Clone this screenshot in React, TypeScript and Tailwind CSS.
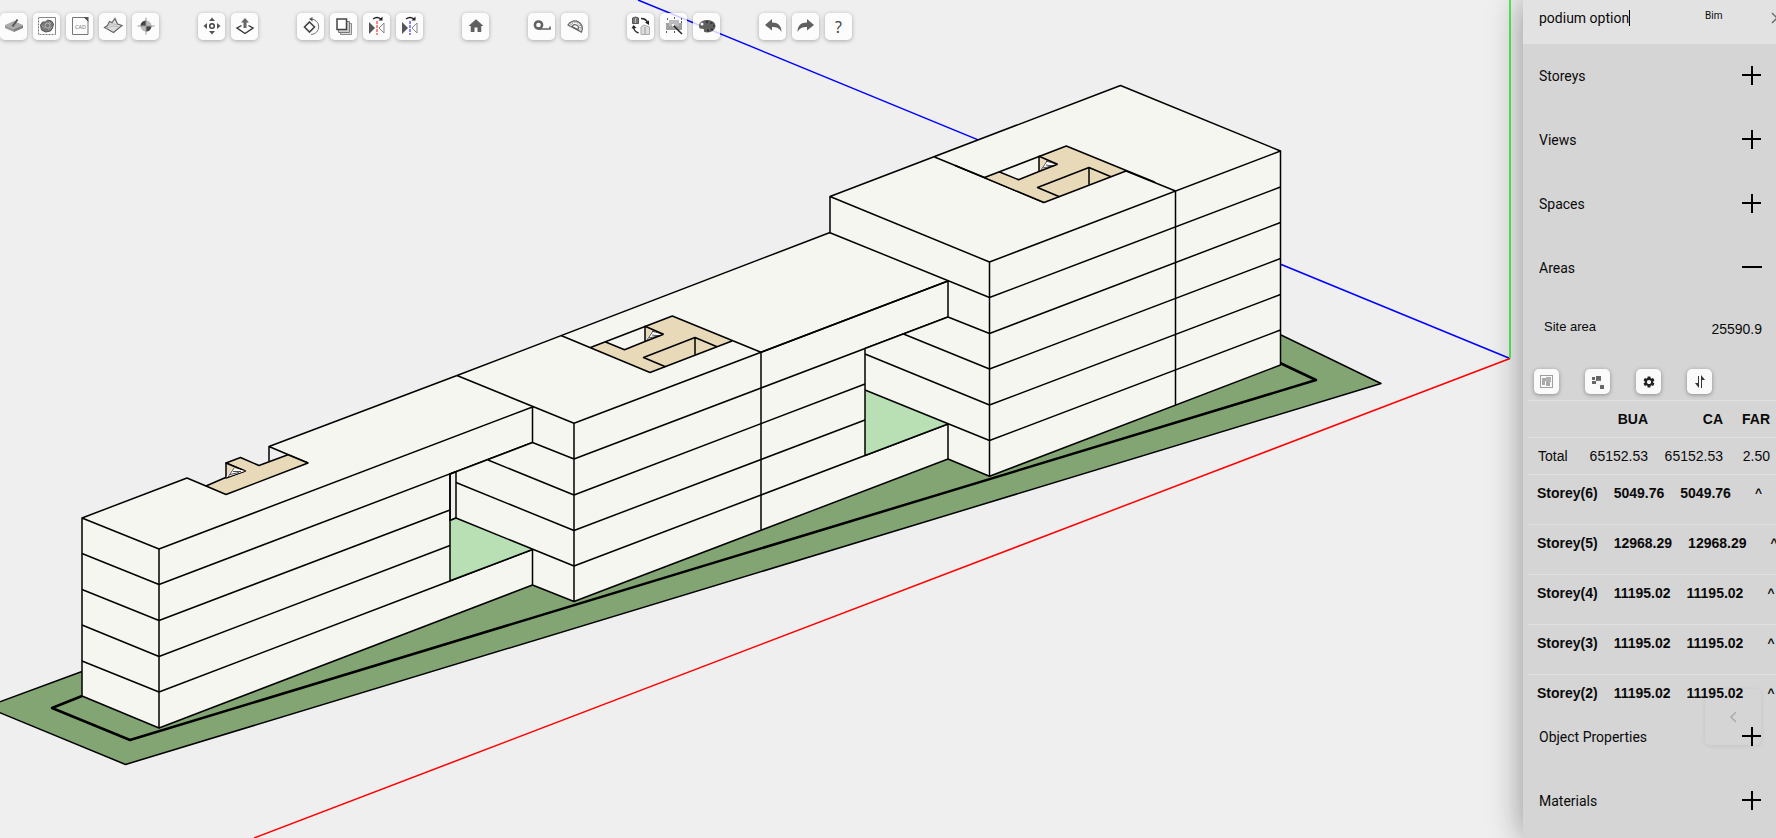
import React from 'react';
import { MdHome, MdSettings } from 'react-icons/md';

interface Tool {
  label: string;
  icon: React.ReactNode;
}

const Glyph: React.FC<{ children: React.ReactNode }> = ({ children }) => (
  <svg viewBox="0 0 27 27" className="h-full w-full" fill="none" aria-hidden="true">
    {children}
  </svg>
);

const MirrorGlyph: React.FC<{ axis: string }> = ({ axis }) => (
  <Glyph>
    <path d="M6 9v12l6-6z" fill="#555" />
    <path d="M21 10v10l-5-5z" stroke="#888" />
    <path d="M14 8v14" stroke={axis} strokeWidth="2" strokeDasharray="3 1" />
    <path d="M10 6q4-3 8 0" stroke="#222" strokeWidth="1.3" />
    <path d="M19.5 3.5v4h-4z" fill="#222" />
  </Glyph>
);

const toolGroups: Tool[][] = [
  [
    {
      label: 'Slab',
      icon: (
        <Glyph>
          <path d="M5 12l9-4 9 4-9 4z" fill="#aaa" />
          <path d="M5 12l9 4v3l-9-4z" fill="#999" />
          <path d="M23 12l-9 4v3l9-4z" fill="#808080" />
          <path d="M12.5 13.5l5-7" stroke="#555" strokeWidth="2" />
        </Glyph>
      ),
    },
    {
      label: 'Image map',
      icon: (
        <Glyph>
          <path d="M6 4.5h16.5v17" stroke="#888" />
          <path d="M5.5 4.5v17h17" stroke="#777" strokeDasharray="2 1" />
          <path d="M7.5 12l2-3h3l2-2 4 1 2 3-1 4-2 3-5 1-4-2z" fill="#777" stroke="#555" />
          <circle cx="14.5" cy="12.5" r="2.5" stroke="#bbb" />
          <path d="M9 12.5l3 3M16 9l2 2M15 17l4-3" stroke="#aaa" />
        </Glyph>
      ),
    },
    {
      label: 'CAD file',
      icon: (
        <Glyph>
          <path d="M6.5 4.5h12l3.5 3.5v13.5h-15.5z" stroke="#777" />
          <path d="M17.5 4h5v5z" fill="#555" />
          <text x="14.5" y="15.8" textAnchor="middle" fontSize="5.5" fill="#777" fontFamily="Noto Sans, sans-serif">
            CAD
          </text>
        </Glyph>
      ),
    },
    {
      label: 'Terrain',
      icon: (
        <Glyph>
          <path d="M5.5 14.5l3-2 2-4 2.5 1 3-4 2.5 5.5 4.5 1.5-8.5 7z" fill="#ddd" stroke="#666" strokeWidth="1.2" />
          <path d="M9 12.5l4-2 5 1.5M7 15l7-2 6 1" stroke="#bbb" />
        </Glyph>
      ),
    },
    {
      label: 'Origin',
      icon: (
        <Glyph>
          <circle cx="14" cy="13" r="5.5" fill="#bbb" />
          <path d="M14 13V7.5a5.5 5.5 0 0 0-5.500 5.500zM14 13v5.500a5.500 5.500 0 0 0 5.500-5.500z" fill="#444" />
          <path d="M14 4.5v17M5.5 13h17" stroke="#999" />
        </Glyph>
      ),
    },
  ],
  [
    {
      label: 'Move',
      icon: (
        <Glyph>
          <circle cx="14" cy="13" r="2.3" stroke="#444" strokeWidth="1.5" />
          <path d="M14 4.5l3 3.5h-6zM14 21.5l3-3.5h-6zM5.5 13l3.5-3v6zM22.5 13l-3.5-3v6z" fill="#555" />
        </Glyph>
      ),
    },
    {
      label: 'Extrude',
      icon: (
        <Glyph>
          <path d="M10.5 12.5l-4.5 2.500 8 5.500 8-5.500-4.500-2.500" stroke="#333" strokeWidth="1.4" />
          <path d="M14 5l4 4.500h-2.500v5.500h-3v-5.500h-2.500z" fill="#666" />
        </Glyph>
      ),
    },
  ],
  [
    {
      label: 'Rotate',
      icon: (
        <Glyph>
          <path d="M12.5 9l5 5-5 5-5-5z" stroke="#444" strokeWidth="1.6" />
          <path d="M14 6a7.5 7.5 0 1 1 0 15.500" stroke="#777" />
          <path d="M15.5 4v4.500l-3.500-2.500z" fill="#555" />
        </Glyph>
      ),
    },
    {
      label: 'Copy',
      icon: (
        <Glyph>
          <path d="M10.5 10.5h11v11h-11z" fill="#ddd" stroke="#888" />
          <path d="M8.5 8.5h11v11h-11z" fill="#ccc" stroke="#777" />
          <path d="M7 6h9.500v10.500h-9.500z" fill="#fff" stroke="#444" strokeWidth="1.5" />
        </Glyph>
      ),
    },
    { label: 'Mirror on red axis', icon: <MirrorGlyph axis="#ff8585" /> },
    { label: 'Mirror on blue axis', icon: <MirrorGlyph axis="#8585ff" /> },
  ],
  [{ label: 'Home', icon: <MdHome className="mb-0.5 h-[18px] w-[18px] text-[#606060]" /> }],
  [
    {
      label: 'Tape measure',
      icon: (
        <Glyph>
          <circle cx="10.5" cy="12" r="3.6" stroke="#606060" strokeWidth="2.5" />
          <path d="M10 16h12v-2.500" stroke="#606060" strokeWidth="1.6" />
        </Glyph>
      ),
    },
    {
      label: 'Protractor',
      icon: (
        <Glyph>
          <path d="M7 12A7.600 7.600 0 0 1 20.500 19Z" stroke="#666" strokeWidth="1.3" />
          <path d="M9.500 11.500A5 5 0 0 1 19 16.500" stroke="#888" strokeWidth="2.5" strokeDasharray="1 1" />
          <path d="M11 13.500A3 3 0 0 1 17 16.600Z" stroke="#666" strokeWidth="1.2" fill="#fff" />
        </Glyph>
      ),
    },
  ],
  [
    {
      label: 'Swap component',
      icon: (
        <Glyph>
          <path d="M5.5 5l3-1 3 1v5.500h-6z" fill="#777" stroke="#555" />
          <path d="M8.5 5v5" stroke="#bbb" />
          <path d="M14 14l3-2 5.500 2v7.500h-8.500z" fill="#ddd" stroke="#aaa" />
          <path d="M18 14v7" stroke="#999" />
          <path d="M14 5.500q5 0 6.500 4M6.500 14q.5 4.500 5 6" stroke="#222" strokeWidth="1.4" />
          <path d="M22 7.500v4.500l-4-2.500zM4.500 15.500l2-3.500 3 3z" fill="#222" />
        </Glyph>
      ),
    },
    {
      label: 'Auto layout',
      icon: (
        <Glyph>
          <path d="M9 7h10v6h-10z" fill="#bbb" />
          <path d="M6 10h3v3h10v-3h3v7h-16z" fill="#a0a0a0" />
          <path d="M7 6h1M14 5h1M21 6h1M6 19h1M14 19h1M21 9h1" stroke="#222" strokeWidth="1.5" />
          <path d="M13.5 12.5l8.500 8.500" stroke="#222" strokeWidth="1.5" />
          <path d="M12 11l2 2M14 11l-1.500 2.500" stroke="#fff" />
        </Glyph>
      ),
    },
    {
      label: 'Palette',
      icon: (
        <Glyph>
          <path
            d="M14 7c5 0 8.500 2.500 8.500 6s-3.500 6.500-8 6.500c-3 0-4-.8-3.500-2s-.5-2-2.500-1.800c-2 .1-2.500-.9-2.500-2.900 0-3.500 3.500-5.800 8-5.800z"
            fill="#606060"
          />
          <circle cx="9" cy="11" r="1.5" fill="#fff" />
          <path d="M13 9h2M17.500 10h2M20 13h1.500M18 16.500h2M14 17.500h2" stroke="#333" strokeWidth="1.8" />
        </Glyph>
      ),
    },
  ],
  [
    {
      label: 'Undo',
      icon: (
        <Glyph>
          <path d="M6 12l7-6v3.500c6 0 9.500 3 9.500 9.500-2-4-5-5-9.500-5v3.500z" fill="#606060" />
        </Glyph>
      ),
    },
    {
      label: 'Redo',
      icon: (
        <Glyph>
          <path d="M22 12l-7-6v3.500c-6 0-9.500 3-9.500 9.500 2-4 5-5 9.500-5v3.500z" fill="#606060" />
        </Glyph>
      ),
    },
    { label: 'Help', icon: <span className="font-['Noto_Sans',sans-serif] text-base leading-none text-[#444]">?</span> },
  ],
];

const Toolbar: React.FC = () => (
  <div className="relative flex gap-[39px] pt-[13px]">
    {toolGroups.map((group, idx) => (
      <div key={idx} className="flex gap-1.5">
        {group.map((tool) => (
          <button
            key={tool.label}
            title={tool.label}
            aria-label={tool.label}
            className="flex h-[27px] w-[27px] shrink-0 items-center justify-center rounded-[5px] bg-white/80 shadow-[0_1px_4px_rgba(0,0,0,0.3)]"
          >
            {tool.icon}
          </button>
        ))}
      </div>
    ))}
  </div>
);

// Stair and lift core cut into a roof
const Core: React.FC<{ transform?: string }> = ({ transform }) => (
  <g transform={transform}>
    <path d="M590.5 347.5L672.3 316L732 341L650 372.5Z" fill="#e8d9b8" stroke="none" />
    <path d="M605 341.7L645 326.3V341.5L624.5 349.7Z" fill="#f5f6f0" stroke="none" />
    <path d="M645 341.5L652 331L663.5 334.3Z" fill="#fff" stroke="none" />
    <path d="M649 338l9-2M652 335l8 1M652 331l10 3M647 340l6-9" strokeWidth="0.7" />
    <path d="M645 341.500l18.500-7.200" />
    <path d="M561 335.5L650 372.5L732 341M590.5 347.5L672.3 316L761 352.3" />
    <path d="M605 341.7L624.5 349.7L645 341.5M645 341.5V326.3L663.5 334.3" />
    <path d="M665.5 366.7L643.5 357.5L695 337.5L717 346.7M695 337.5V354.7" />
  </g>
);

const ModelCanvas: React.FC = () => (
  <svg
    viewBox="0 0 1523 838"
    preserveAspectRatio="xMaxYMid slice"
    className="absolute inset-0 h-full w-full"
    role="img"
    aria-label="Podium building model"
  >
    <path d="M638 0L1510 358.5" stroke="#0000ff" strokeWidth="1.5" />
    <path d="M1510 358.5L254 838" stroke="#ff0000" strokeWidth="1.5" />
    <path d="M1510 0V358" stroke="#4ef04e" strokeWidth="2" />
    <g fill="none" stroke="#000" strokeWidth="1.5" strokeLinejoin="round">
      {/* site */}
      <path d="M-14 707L82 671.5L1250 320L1381 383.5L125.5 764.5Z" fill="#83a574" />
      <path d="M82 696L52 708L130 740L1316 380L1280 363" strokeWidth="2.5" />

      {/* west wing */}
      <path
        d="M82 518L187 478L206 486L288 455L269 446.5L457 375.5L532.5 407V585L159 728L82 696Z"
        fill="#f5f6f0"
        stroke="none"
      />
      <path d="M82 518L187 478L206 486M269 461.5V446.5L457 375.5M269 446.5L308 463" />
      <path d="M82 518V696L159 728V549Z" />
      <path d="M159 549L532.5 407M159 584.5L532.5 442.5M159 692L532.5 549.5M159 728L532.5 585" />
      <path d="M159 620.5L450 510M159 656.5L450 545.5" />
      <path d="M82 553.5L159 584.5M82 589.5L159 620.5M82 625L159 656.5M82 661L159 692" />
      <path d="M206 486L226 494.5L308 463L288 454.7L259 465.5L240.5 457.5L226 463L245 471L225 477.7Z" fill="#e8d9b8" />
      <path d="M226 463V478L245 471Z" fill="#e8d9b8" />
      <path d="M226 477.500L233 468L245 471Z" fill="#fff" stroke="none" />
      <path d="M230 474.500l9-2M233 471.500l8 0M228 477l6-9" strokeWidth="0.7" />

      {/* middle tower and link */}
      <path
        d="M457 375.5L830 232.5L948 281V459L574 601.5L532.5 585V549.5L456 518V471.5L532.5 442.5V407Z"
        fill="#f5f6f0"
        stroke="none"
      />
      <path d="M450 474L456 471.7V518L450 520.5Z" fill="#efefef" />
      <path d="M450 520.5L456 518L532.5 549.5L450 580.8Z" fill="#b9e0b4" stroke="none" />
      <path d="M450 474V580.8L532.5 549.5M450 520.5L456 518M450 474L532.5 442.5" />
      <path d="M457 375.5L830 232.5M457 375.5L574 423.3V601.5L532.5 585V549.5M532.5 407V442.5L574 459" />
      <path d="M488 460L574 495M456 482.5L574 530.5M456 518L574 566" />
      <path d="M574 423.3L761 352.3L948 281M574 459L948 317M574 495L865 384M574 530.5L865 420M574 566L948 424M574 601.5L948 459" />
      <path d="M761 352.3V530.5" />
      <Core />

      {/* east tower */}
      <path
        d="M830 196.5L1120.5 85.5L1280.5 151V365L989.5 476.3L948 459V424L865 390V348.5L948 317V281L830 232.7Z"
        fill="#f5f6f0"
        stroke="none"
      />
      <path d="M865 390L948 424L865 455.5Z" fill="#b9e0b4" stroke="none" />
      <path d="M865 348.5V455.5L948 424M865 348.5L948 317M761 352.3L948 281" />
      <path d="M830 196.5L1120.5 85.5L1280.5 151L989.5 262Z" />
      <path d="M830 196.5V232.7L989.5 297.5M948 281V317L989.5 333.5M903.5 334L989.5 369M865 354L989.5 405M865 390L989.5 440.5M948 424V459L989.5 476.3" />
      <path d="M989.5 262V476.3L1280.5 365V151M1175.5 191V405" />
      <path d="M989.5 297.5L1280.5 187M989.5 333.5L1280.5 222.5M989.5 369L1280.5 258.5M989.5 405L1280.5 294.5M989.5 440.5L1280.5 330" />
      <path d="M934.5 157L984.5 177.5M1126 171L1175.5 191" />
      <g transform="translate(394 -170)">
        <path d="M590.5 347.5L672.3 316L732 341L650 372.5Z" fill="#e8d9b8" stroke="none" />
      </g>
      <path d="M984.5 177.5L1044 202.5" />
      <Core transform="translate(394 -170)" />
    </g>
  </svg>
);

interface SectionProps {
  title: string;
  open?: boolean;
  children?: React.ReactNode;
}

const Section: React.FC<SectionProps> = ({ title, open, children }) => (
  <section>
    <h2>
      <button aria-expanded={!!open} className="flex h-16 w-full items-center justify-between pl-4 pr-3.5 text-left">
        <span>{title}</span>
        <svg viewBox="0 0 20 20" className="h-5 w-5" aria-hidden="true">
          <path d={open ? 'M0 9h20' : 'M0 9h19M10 0v19'} stroke="#000" strokeWidth="2" />
        </svg>
      </button>
    </h2>
    {children}
  </section>
);

const areaTools: Tool[] = [
  {
    label: 'Select areas',
    icon: (
      <svg viewBox="0 0 25 25" fill="none">
        <path d="M6.5 6.5h12v12h-12z" stroke="#444" strokeDasharray="1 1" />
        <path d="M8 9h4v3h-4zM8 12h3v4h-3zM12 13h4v4h-4z" fill="#aaa" />
        <path d="M12 8h5v5h-5z" fill="#b0b0b0" />
      </svg>
    ),
  },
  {
    label: 'Group areas',
    icon: (
      <svg viewBox="0 0 25 25" fill="#666">
        <path d="M11 7h5v5h-5zM7 8h3v3h-3zM7 12h4v3h-4zM15 16h4v4h-4z" />
        <path d="M12 12h4v4h-4z" fill="#fff" stroke="#ddd" strokeWidth="0.5" />
      </svg>
    ),
  },
  { label: 'Area settings', icon: <MdSettings className="h-3.5 w-3.5 text-[#222]" /> },
  {
    label: 'Sort',
    icon: (
      <svg viewBox="0 0 25 25" fill="#333">
        <path d="M11 7h1v12l-4-5h3zM14 6l4 5h-3v8h-1z" />
      </svg>
    ),
  },
];

const storeys = [
  { name: 'Storey(6)', bua: '5049.76', ca: '5049.76' },
  { name: 'Storey(5)', bua: '12968.29', ca: '12968.29' },
  { name: 'Storey(4)', bua: '11195.02', ca: '11195.02' },
  { name: 'Storey(3)', bua: '11195.02', ca: '11195.02' },
  { name: 'Storey(2)', bua: '11195.02', ca: '11195.02' },
];

const AreaDetails: React.FC = () => (
  <div className="h-[405px] overflow-hidden pl-[5px] font-['Liberation_Sans',sans-serif]">
    <div className="flex h-[69px] items-start justify-between pl-4 pr-3.5 pt-4">
      <span className="text-[13px] leading-[22px]">Site area</span>
      <span className="pt-[3px] leading-5">25590.9</span>
    </div>
    <div className="flex h-[31px] gap-[26px] pl-1.5">
      {areaTools.map((tool) => (
        <button
          key={tool.label}
          title={tool.label}
          aria-label={tool.label}
          className="flex h-[25px] w-[25px] items-center justify-center rounded-[5px] bg-[#fafafa] shadow-[0_1px_4px_rgba(0,0,0,0.35)]"
        >
          {tool.icon}
        </button>
      ))}
    </div>
    <table className="w-full table-fixed border-collapse whitespace-nowrap">
      <colgroup>
        <col className="w-[48px]" />
        <col className="w-[72px]" />
        <col className="w-[75px]" />
        <col />
      </colgroup>
      <thead>
        <tr className="h-[37px] border-t border-[#e0e0e0] text-right">
          <td />
          <th scope="col" className="p-0 text-right font-bold">BUA</th>
          <th scope="col" className="p-0 text-right font-bold">CA</th>
          <th scope="col" className="p-0 pr-1.5 text-right font-bold">FAR</th>
        </tr>
      </thead>
      <tbody>
        <tr className="h-[37px] border-t border-[#e0e0e0] text-right">
          <th scope="row" className="p-0 pl-2.5 text-left font-normal">Total</th>
          <td>65152.53</td>
          <td>65152.53</td>
          <td className="pr-1.5">2.50</td>
        </tr>
        {storeys.map((storey) => (
          <tr key={storey.name} className="h-[50px] border-t border-[#e0e0e0] align-top font-bold">
            <td colSpan={4} className="overflow-hidden p-0">
              <button aria-expanded="false" className="flex gap-4 pl-[9px] pt-2 leading-5">
                <span>{storey.name}</span>
                <span>{storey.bua}</span>
                <span>{storey.ca}</span>
                <span className="pl-2 text-[12px]">^</span>
              </button>
            </td>
          </tr>
        ))}
      </tbody>
    </table>
  </div>
);

const SidePanel: React.FC = () => (
  <aside className="relative z-10 w-[253px] shrink-0 bg-[#d5d5d5] shadow-[0_0_32px_rgba(0,0,0,0.4)]">
    <header className="flex h-11 items-start overflow-hidden bg-[#e2e2e2] pl-4 pt-2">
      <div className="flex w-[166px] shrink-0 items-center">
        <input
          type="text"
          aria-label="Project name"
          defaultValue="podium option"
          className="field-sizing-content h-5 bg-transparent caret-transparent outline-none"
        />
        <span className="h-4 w-px bg-black" />
      </div>
      <span className="w-[66px] shrink-0 text-[10px] leading-4">Bim</span>
      <button aria-label="Close" className="mt-1 h-3 w-3 shrink-0">
        <svg viewBox="0 0 12 12" stroke="#666" strokeWidth="1.3">
          <path d="M1 1l10 10M11 1L1 11" />
        </svg>
      </button>
    </header>
    <Section title="Storeys" />
    <Section title="Views" />
    <Section title="Spaces" />
    <Section title="Areas" open>
      <AreaDetails />
    </Section>
    <Section title="Object Properties" />
    <Section title="Materials" />
    <button
      aria-label="Collapse panel"
      className="absolute bottom-[93px] right-[15px] flex h-14 w-14 items-center justify-center rounded-md shadow-[0_1px_5px_rgba(0,0,0,0.08)]"
    >
      <svg viewBox="0 0 12 12" className="h-3 w-3" fill="none" stroke="#aaa" strokeWidth="1.5">
        <path d="M9 1L4 6l5 5" />
      </svg>
    </button>
  </aside>
);

const App: React.FC = () => {
  return (
    <div className="flex h-screen overflow-hidden bg-[#efefef] font-['Roboto',sans-serif] text-[14px] text-[#0a0a0a]">
      <main className="relative min-w-0 flex-1 overflow-hidden">
        <ModelCanvas />
        <Toolbar />
      </main>
      <SidePanel />
    </div>
  );
};

export default App;
